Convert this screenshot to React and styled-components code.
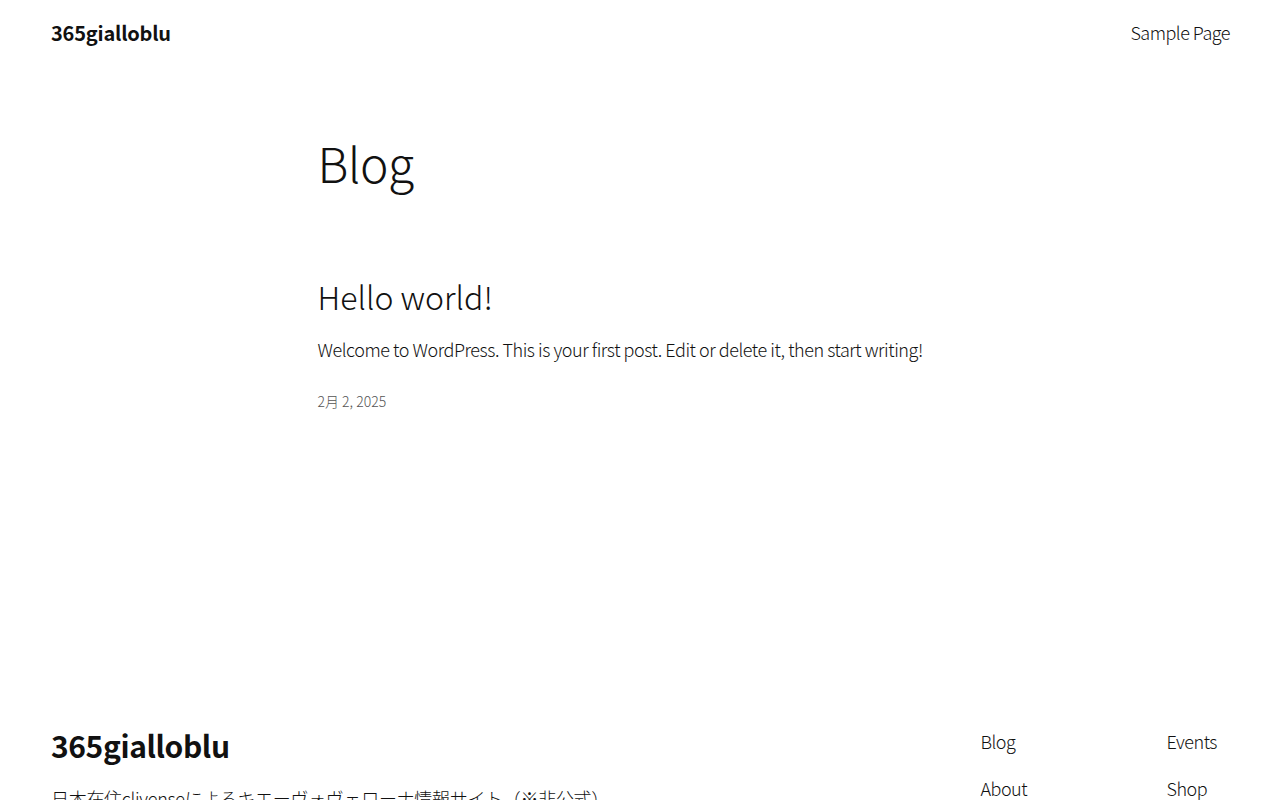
import React from "react";
import styled, { createGlobalStyle } from "styled-components";

const Global = createGlobalStyle`
  html, body { margin: 0; padding: 0; background: #fff; }
  body {
    font-family: "Noto Sans CJK JP", "Noto Sans", sans-serif;
    font-weight: 300;
    color: #111;
    -webkit-font-smoothing: antialiased;
  }
  a { color: inherit; text-decoration: none; }
`;

const Page = styled.div`
  min-height: 800px;
  display: flex;
  flex-direction: column;
`;

const Header = styled.header`
  display: flex;
  align-items: center;
  justify-content: space-between;
  padding: 15px 50px 0 51px;
  height: 34px;
`;

const SiteTitle = styled.a`
  font-size: 20px;
  font-weight: 700;
  letter-spacing: -0.2px;
`;

const NavLink = styled.a`
  font-size: 18px;
  font-weight: 300;
  letter-spacing: -0.5px;
`;

const Main = styled.main`
  width: 645px;
  margin: 0 auto;
  padding-top: 85px;
  flex: 1;
`;

const PageTitle = styled.h1`
  margin: 0;
  font-size: 48px;
  font-weight: 300;
  line-height: 1.2;
  letter-spacing: -0.5px;
`;

const Post = styled.article`
  margin-top: 85px;
`;

const PostTitle = styled.h2`
  margin: 0;
  font-size: 32px;
  font-weight: 300;
  line-height: 1.2;
`;

const Excerpt = styled.p`
  margin: 21px 0 0;
  font-size: 18px;
  line-height: 1.5;
  letter-spacing: -0.45px;
`;

const PostDate = styled.time`
  display: block;
  margin-top: 28px;
  font-size: 14px;
  color: #555;
`;

const Footer = styled.footer`
  display: flex;
  justify-content: space-between;
  padding: 0 63px 0 51px;
  margin-top: 305px;
`;

const FooterBrand = styled.div`
  display: flex;
  flex-direction: column;
  padding-top: 7px;
`;

const FooterTitle = styled.a`
  font-size: 30px;
  font-weight: 700;
  letter-spacing: -0.4px;
`;

const Tagline = styled.p`
  margin: 18px 0 0;
  font-size: 18px;
  letter-spacing: -0.3px;
`;

const FooterNav = styled.nav`
  display: grid;
  grid-template-columns: 186px auto;
  row-gap: 8px;
  padding-top: 9px;
`;

const FooterLink = styled.a`
  font-size: 18px;
  line-height: 1.8;
  letter-spacing: -0.5px;
`;

export default function App() {
  return (
    <Page>
      <Global />
      <Header>
        <SiteTitle href="#">365gialloblu</SiteTitle>
        <NavLink href="#">Sample Page</NavLink>
      </Header>
      <Main>
        <PageTitle>Blog</PageTitle>
        <Post>
          <PostTitle>Hello world!</PostTitle>
          <Excerpt>
            Welcome to WordPress. This is your first post. Edit or delete it, then start writing!
          </Excerpt>
          <PostDate>2月 2, 2025</PostDate>
        </Post>
      </Main>
      <Footer>
        <FooterBrand>
          <FooterTitle href="#">365gialloblu</FooterTitle>
          <Tagline>日本在住clivenseによるキエーヴォヴェローナ情報サイト（※非公式）</Tagline>
        </FooterBrand>
        <FooterNav>
          <FooterLink href="#">Blog</FooterLink>
          <FooterLink href="#">Events</FooterLink>
          <FooterLink href="#">About</FooterLink>
          <FooterLink href="#">Shop</FooterLink>
        </FooterNav>
      </Footer>
    </Page>
  );
}
